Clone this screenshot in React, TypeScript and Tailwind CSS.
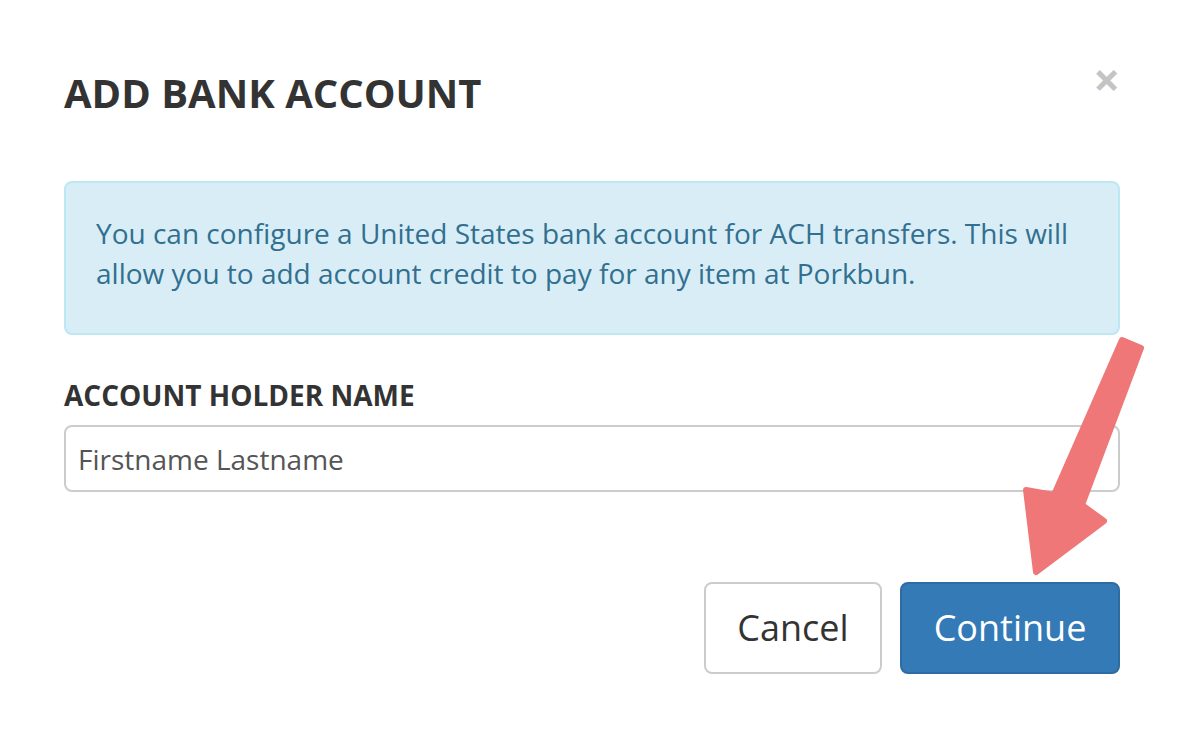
import React from 'react';

// 銀行口座追加モーダル
const App: React.FC = () => {
  return (
    <div
      className="relative w-[1182px] h-[740px] bg-white pl-[64px] pr-[62px] text-[#333]"
      style={{ fontFamily: '"Open Sans", "Liberation Sans", sans-serif' }}
    >
      {/* ヘッダー */}
      <div className="flex items-start justify-between pt-[70px]">
        <h1 className="text-[40px] leading-[46px] font-bold">ADD BANK ACCOUNT</h1>
        <button className="mr-0 mt-[-14px] text-[47px] leading-[46px] font-bold text-[#c4c4c4]">×</button>
      </div>

      {/* 案内 */}
      <div className="mt-[65px] rounded-[8px] border-2 border-[#bce8f1] bg-[#d9edf7] px-[30px] pt-[30px] pb-[40px] text-[28px] leading-[40px] text-[#31708f]">
        You can configure a United States bank account for ACH transfers. This will allow you to add account credit to pay for any item at Porkbun.
      </div>

      {/* フォーム */}
      <div className="mt-[40px]">
        <label className="block text-[28px] leading-[40px] font-bold text-[#333] mb-[10px]">ACCOUNT HOLDER NAME</label>
        <input
          className="block w-full h-[67px] rounded-[8px] border-2 border-[#ccc] px-[12px] text-[28px] text-[#555] outline-none"
          defaultValue="Firstname Lastname"
        />
      </div>

      {/* ボタン */}
      <div className="mt-[90px] flex justify-end gap-[18px]">
        <button className="h-[92px] w-[178px] rounded-[8px] border-2 border-[#ccc] bg-white text-[36px] text-[#333]">
          Cancel
        </button>
        <button className="h-[92px] w-[220px] rounded-[8px] border-2 border-[#2e6da4] bg-[#337ab7] text-[36px] text-white">
          Continue
        </button>
      </div>

      {/* 矢印 */}
      <svg className="absolute left-0 top-0 pointer-events-none" width="1182" height="740">
        <path
          d="M1122 340 L1141 348 L1082 505 L1104 521 L1036 572 L1026 490 L1054 495 Z"
          fill="#f07777"
          stroke="#f07777"
          strokeWidth="6"
          strokeLinejoin="round"
        />
      </svg>
    </div>
  );
};

export default App;
